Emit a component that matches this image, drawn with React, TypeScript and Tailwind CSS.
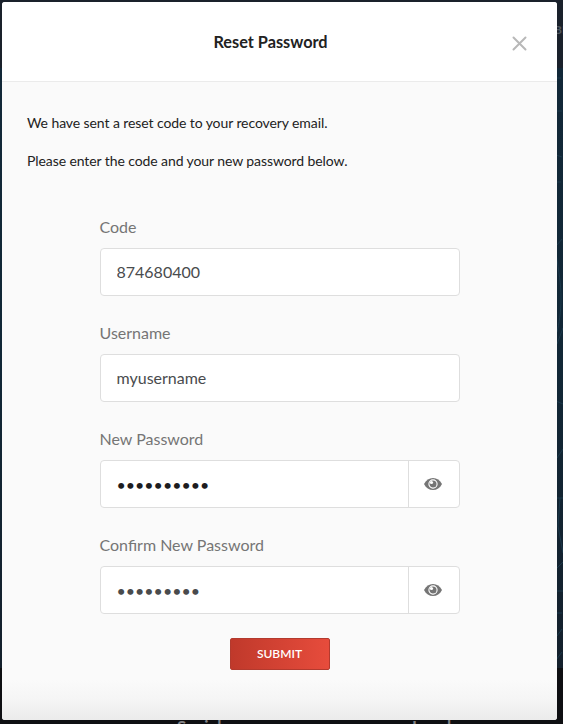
import type { ReactNode } from 'react';

function EyeIcon() {
  return (
    <svg width="18" height="12" viewBox="0 0 18 12" fill="none" className="mr-0.5" aria-hidden="true">
      <path d="M0 6C2 2 5.2 0 9 0s7 2 9 6c-2 4-5.2 6-9 6S2 10 0 6Z" fill="#757575" />
      <circle cx="9" cy="6" r="4.1" stroke="#fff" strokeWidth="1.1" />
      <circle cx="9" cy="6" r="2.6" fill="#757575" />
      <circle cx="7.5" cy="4.5" r="1.6" fill="#fff" />
    </svg>
  );
}

function Field({ label, children }: { label: string; children: ReactNode }) {
  return (
    <label className="flex flex-col gap-[9px]">
      <span className="-ml-[0.5px] h-6 text-base leading-6 text-[#757575]">{label}</span>
      <div className="flex h-12 overflow-hidden rounded border border-[#dedede] bg-white">{children}</div>
    </label>
  );
}

const inputStyle = 'min-w-0 flex-1 bg-transparent pl-[15.5px] pr-4 text-base text-[#494b4d] outline-none';

function PasswordInput({ value, active }: { value: string; active?: boolean }) {
  return (
    <>
      <input
        type="password"
        defaultValue={value}
        className={active ? 'min-w-0 flex-1 bg-transparent pl-[15.5px] pr-4 pt-px text-base text-[#1d1d1f] outline-none' : 'min-w-0 flex-1 bg-transparent pl-[15.5px] pr-4 pt-px text-base text-[#494b4d] outline-none'}
      />
      <button type="button" aria-label="Show password" className="flex w-[51px] shrink-0 items-center justify-center border-l border-[#dedede]">
        <EyeIcon />
      </button>
    </>
  );
}

export default function App() {
  return (
    <div className="relative h-[724px] w-[563px] overflow-hidden font-['Lato',sans-serif]">
      <div className="flex h-full flex-col">
        <div className="flex h-[68px] justify-end overflow-hidden bg-[#1a212b] pt-5">
          <span className="w-[9px] overflow-hidden whitespace-nowrap text-xs font-bold leading-[20px] text-[#50575e]">BL</span>
        </div>
        <div className="h-[600px] bg-linear-to-b from-[#122838] via-[#112736] to-[#14202c]">
          <svg className="ml-auto" width="7" height="600" viewBox="0 0 7 600" fill="none" stroke="#1b394b" aria-hidden="true">
            <path d="M1 10h4M1 43h5M0 87l6 2M0 114h5M1 177l5-6M0 185c3 20 5 31 5 45s-2 26-4 34M7 260L1 276M0 333l7 3M1 390l6-9M0 430h7M4 430l-2 28 5 27M0 501l7-7M0 523h7M1 545h5M1 568l5-7M0 592l6-8" />
          </svg>
        </div>
        <div className="flex flex-1 overflow-hidden bg-[#0e0f12] pl-[177px] pt-[47px] text-[17px] font-bold leading-6 text-[#808084]">
          <span className="w-[235px]">Social</span>
          <span>Legal</span>
        </div>
      </div>

      <section className="absolute left-[2px] top-[2px] flex h-[718px] w-[555px] flex-col overflow-hidden rounded-[3px] bg-[#fafafa]">
        <header className="grid h-20 shrink-0 grid-cols-[1fr_auto_1fr] items-center border-b border-[#ebebeb] bg-white px-[30px]">
          <h1 className="col-start-2 -ml-[18px] pt-0.5 text-[16.3px] font-bold text-[#222]">Reset Password</h1>
          <button type="button" aria-label="Close" className="mt-[3px] justify-self-end">
            <svg width="15" height="15" viewBox="0 0 15 15" fill="none" stroke="#b8b8b8" strokeWidth="2" strokeLinecap="round">
              <path d="m1.5 1.5 12 12m0-12-12 12" />
            </svg>
          </button>
        </header>

        <div className="flex flex-col gap-[18px] px-[25px] pt-[31px] text-sm leading-5 tracking-[-0.09px] text-[#222]">
          <p>We have sent a reset code to your recovery email.</p>
          <p>Please enter the code and your new password below.</p>
        </div>

        <form className="ml-[98px] mt-11 flex w-[360px] flex-col gap-[25px]">
          <Field label="Code"><input defaultValue="874680400" className={inputStyle} /></Field>
          <Field label="Username"><input defaultValue="myusername" className={inputStyle} /></Field>
          <Field label="New Password"><PasswordInput value="password12" active /></Field>
          <Field label="Confirm New Password"><PasswordInput value="password1" /></Field>
          <button type="button" className="-mt-px h-8 w-[100px] self-center rounded-[2px] border border-[#b33a2e] bg-linear-to-r from-[#c0392b] to-[#e74c3c] pr-px text-xs font-semibold text-white">
            SUBMIT
          </button>
        </form>
        <div className="mt-auto h-10 bg-linear-to-b from-[#fafafa] via-[#f5f5f5] to-[#ebebeb]" />
      </section>
    </div>
  );
}
